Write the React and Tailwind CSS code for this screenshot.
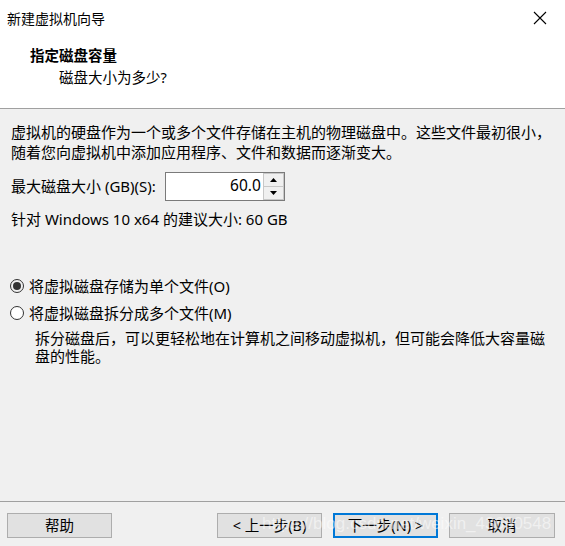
export default function App() {
  const font = { fontFamily: '"Noto Sans", "Noto Sans CJK SC", sans-serif' }
  return (
    <div style={font} className="w-[565px] h-[546px] bg-[#f0f0f0] flex flex-col text-black text-[14px] overflow-hidden">
      <div className="h-[109px] bg-white border-b border-[#a0a0a0] flex flex-col">
        <div className="flex items-center justify-between h-[36px] pl-[7px] pr-[16px]">
          <span className="text-[14px]">新建虚拟机向导</span>
          <svg width="14" height="14" viewBox="0 0 14 14" className="mr-[2px]">
            <path d="M1 1 L13 13 M13 1 L1 13" stroke="#000" strokeWidth="1.1" />
          </svg>
        </div>
        <div className="pl-[30px] pt-[9px] font-bold leading-[20px] text-[14.5px]">指定磁盘容量</div>
        <div className="pl-[59px] pt-[2px] leading-[20px] text-[14.5px]">磁盘大小为多少?</div>
      </div>
      <div className="flex-1 flex flex-col pl-[11px] pr-[8px] pt-[13px] text-[15px]">
        <p className="leading-[20px]">
          虚拟机的硬盘作为一个或多个文件存储在主机的物理磁盘中。这些文件最初很小，随着您向虚拟机中添加应用程序、文件和数据而逐渐变大。
        </p>
        <div className="flex items-center mt-[9px] h-[30px]">
          <span>最大磁盘大小 (GB)(S):</span>
          <div className="ml-[9px] flex h-[29px] border border-[#7a7a7a] bg-white">
            <div className="w-[97px] flex items-center justify-end pr-[2px] text-[15.5px]">60.0</div>
            <div className="w-[21px] flex flex-col">
              <div className="flex-1 flex items-center justify-center bg-[#f0f0f0] border border-[#c8c8c8]">
                <svg width="7" height="4" viewBox="0 0 7 4"><path d="M3.5 0 L7 4 L0 4 Z" fill="#000" /></svg>
              </div>
              <div className="flex-1 flex items-center justify-center bg-[#f0f0f0] border border-t-0 border-[#c8c8c8]">
                <svg width="7" height="4" viewBox="0 0 7 4"><path d="M0 0 L7 0 L3.5 4 Z" fill="#000" /></svg>
              </div>
            </div>
          </div>
        </div>
        <div className="mt-[8px] leading-[20px]">针对 Windows 10 x64 的建议大小: 60 GB</div>
        <div className="mt-[47px] flex items-center h-[20px]">
          <span className="w-[14px] h-[14px] rounded-full border border-[#333] flex items-center justify-center mr-[5px] ml-[-1px]">
            <span className="w-[8px] h-[8px] rounded-full bg-[#333]"></span>
          </span>
          <span>将虚拟磁盘存储为单个文件(O)</span>
        </div>
        <div className="mt-[7px] flex items-center h-[20px]">
          <span className="w-[14px] h-[14px] rounded-full border border-[#333] bg-white mr-[5px] ml-[-1px]"></span>
          <span>将虚拟磁盘拆分成多个文件(M)</span>
        </div>
        <p className="pl-[24px] pr-[6px] mt-[6px] leading-[18px]">
          拆分磁盘后，可以更轻松地在计算机之间移动虚拟机，但可能会降低大容量磁盘的性能。
        </p>
      </div>
      <div className="relative h-[45px] border-t border-[#a0a0a0] flex items-start pt-[11px] pl-[7px]">
        <button className="w-[105px] h-[25px] bg-[#e1e1e1] border border-[#adadad] text-[14.5px]">帮助</button>
        <button className="ml-[105px] w-[105px] h-[25px] bg-[#e1e1e1] border border-[#adadad] text-[14.5px]">&lt; 上一步(B)</button>
        <button className="ml-[11px] w-[105px] h-[25px] bg-[#e1e1e1] border-2 border-[#0078d7] text-[14.5px]">下一步(N) &gt;</button>
        <button className="ml-[11px] w-[106px] h-[25px] bg-[#e1e1e1] border border-[#adadad] text-[14.5px]">取消</button>
        <span className="absolute left-[262px] top-[12px] text-[17px] leading-[20px] text-white/50 pointer-events-none whitespace-nowrap" style={{ fontFamily: 'Arial, "Liberation Sans", sans-serif' }}>
          https://blog.csdn.net/weixin_43690548
        </span>
      </div>
    </div>
  )
}
